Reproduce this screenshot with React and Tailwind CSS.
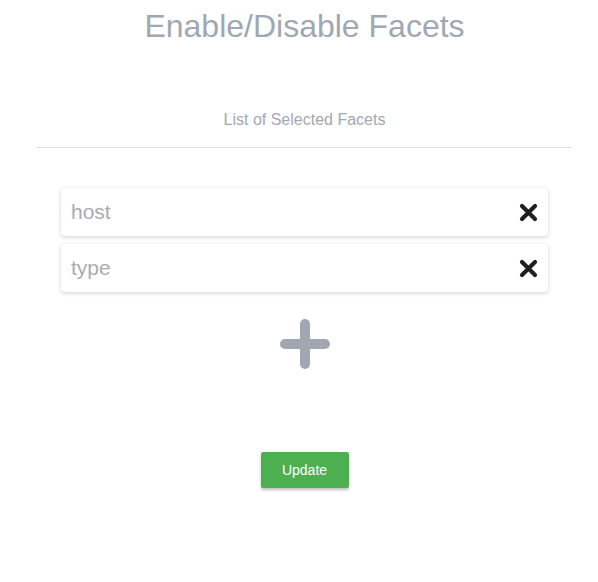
const facets = ['host', 'type'];

const CloseIcon = () => (
  <svg width="19" height="19" viewBox="0 0 19 19">
    <path d="M3 3 L16 16 M16 3 L3 16" stroke="#1f1f1f" strokeWidth="4.2" strokeLinecap="round" />
  </svg>
);

const PlusIcon = () => (
  <svg width="50" height="50" viewBox="0 0 50 50">
    <path d="M25 5 V45 M5 25 H45" stroke="#a0a7b0" strokeWidth="10" strokeLinecap="round" />
  </svg>
);

const App = () => {
  return (
    <div className="min-h-screen bg-white pl-[11px] font-['Liberation_Sans',Arial,sans-serif]">
      <h1 className="pt-[6px] text-center text-[32px] leading-[40px] text-[#a0a8b3]">Enable/Disable Facets</h1>
      <div className="mx-[26px] mt-[64px] border-b border-[#e0e0e0] pb-[17px] text-center text-[16px] leading-[20px] text-[#a0a8b3]">
        List of Selected Facets
      </div>
      <div className="mx-[50px] mt-[40px] flex flex-col gap-[8px]">
        {facets.map(f => (
          <div key={f} className="flex h-[48px] items-center justify-between rounded-[4px] bg-white pl-[10px] pr-[10px] shadow-[0_1px_4px_rgba(0,0,0,0.2)]">
            <span className="text-[21px] text-[#a9acb0]">{f}</span>
            <CloseIcon />
          </div>
        ))}
      </div>
      <div className="mt-[27px] flex justify-center">
        <PlusIcon />
      </div>
      <div className="mt-[83px] flex justify-center">
        <button className="h-[36px] w-[88px] rounded-[2px] bg-[#4caf50] text-[14px] text-white shadow-[0_2px_3px_rgba(0,0,0,0.25)]">
          Update
        </button>
      </div>
    </div>
  );
};

export default App;
